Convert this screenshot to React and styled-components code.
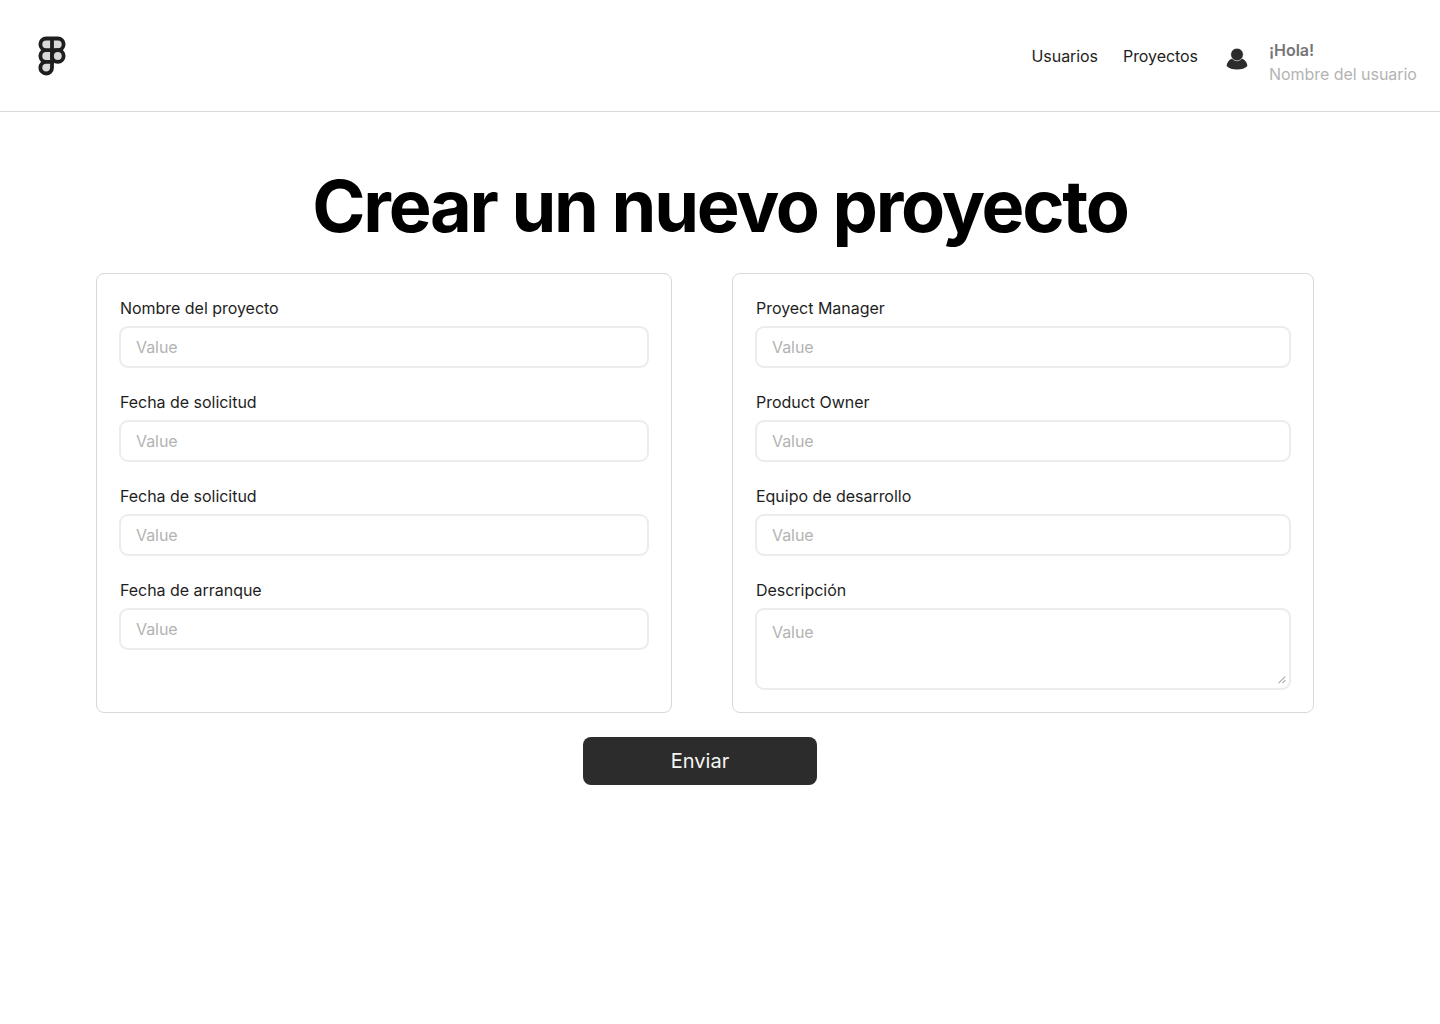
import React from "react";
import styled, { createGlobalStyle } from "styled-components";

const GlobalStyle = createGlobalStyle`
  *, *::before, *::after { box-sizing: border-box; }
  body { margin: 0; background: #fff; font-family: Inter, "Liberation Sans", sans-serif; color: #1e1e1e; }
`;

const Page = styled.div`
  min-height: 1024px;
  display: flex;
  flex-direction: column;
`;

const Header = styled.header`
  height: 112px;
  border-bottom: 1px solid #d9d9d9;
  display: flex;
  align-items: center;
  justify-content: space-between;
  padding: 0 22px 0 32px;
`;

const Nav = styled.nav`
  display: flex;
  align-items: center;
`;

const NavLink = styled.a`
  font-size: 16px;
  line-height: 16px;
  letter-spacing: -0.06px;
  margin-right: 25px;
  padding-top: 1px;
`;

const UserIcon = styled.svg`
  margin: 6px 21px 0 3px;
`;

const UserText = styled.div`
  width: 149px;
  font-size: 16px;
  line-height: 24px;
  letter-spacing: -0.04px;
  padding-top: 13px;
  color: #b3b3b3;
  white-space: nowrap;
`;

const Greeting = styled.div`
  color: #757575;
  font-weight: 600;
`;

const Title = styled.h1`
  margin: 51px 0 0;
  text-align: center;
  font-size: 72px;
  line-height: 86px;
  font-weight: 700;
  letter-spacing: -2.22px;
  color: #000;
`;

const Columns = styled.main`
  display: flex;
  gap: 60px;
  margin: 24px 0 0 96px;
`;

const Card = styled.section`
  width: ${(p) => p.$width}px;
  height: 440px;
  border: 1px solid #d9d9d9;
  border-radius: 8px;
  padding: 23px 22px;
  display: flex;
  flex-direction: column;
  gap: 23px;
`;

const Field = styled.label`
  display: flex;
  flex-direction: column;
  gap: 7px;
  font-size: 16px;
  line-height: 22px;
  letter-spacing: -0.03px;
`;

const Caption = styled.span`
  padding-left: 1px;
`;

const Control = styled.input`
  font: 16px/16px Inter, sans-serif;
  letter-spacing: -0.06px;
  height: 42px;
  width: 100%;
  padding: 0 15px 1px;
  border: 2px solid #ececec;
  border-radius: 9px;
  background: #fff;
  outline: none;
  &::placeholder { color: #b3b3b3; opacity: 1; }
`;

const AreaBox = styled.span`
  position: relative;
  display: block;
  height: 82px;
`;

const Area = styled(Control)`
  display: block;
  height: 82px;
  padding: 11px 15px;
  line-height: 22px;
  resize: none;
`;

const Grip = styled.svg`
  position: absolute;
  right: 5px;
  bottom: 6px;
`;

const Submit = styled.button`
  width: 234px;
  height: 48px;
  margin: 24px 0 0 583px;
  border: 0;
  border-radius: 8px;
  background: #2c2c2c;
  color: #f5f5f5;
  font: 20px/24px Inter, sans-serif;
`;

const Logo = () => (
  <svg width="40" height="40" viewBox="0 0 40 40" fill="#d9d9d9" stroke="#1e1e1e" strokeWidth="3.8">
    <path d="M20 2.5H14.2a5.83 5.83 0 0 0 0 11.66H20ZM20 2.5h5.8a5.83 5.83 0 0 1 0 11.66H20ZM20 14.16h-5.8a5.83 5.83 0 0 0 0 11.66H20Z" />
    <circle cx="25.8" cy="20" r="5.83" />
    <path d="M14.2 25.83H20v5.83a5.83 5.83 0 1 1-5.8-5.83Z" />
  </svg>
);

const left = ["Nombre del proyecto", "Fecha de solicitud", "Fecha de solicitud", "Fecha de arranque"];
const right = ["Proyect Manager", "Product Owner", "Equipo de desarrollo"];

const TextField = ({ label }) => (
  <Field>
    <Caption>{label}</Caption>
    <Control placeholder="Value" />
  </Field>
);

export default function App() {
  return (
    <Page>
      <GlobalStyle />
      <Header>
        <Logo />
        <Nav>
          <NavLink>Usuarios</NavLink>
          <NavLink>Proyectos</NavLink>
          <UserIcon width="22" height="22" viewBox="0 0 22 22" fill="#2c2c2c">
            <path d="M5.5 10.8H16.5C19.3 12.2 21.2 14.8 21.4 18C19.2 20.4 15.5 21.6 11 21.6S2.8 20.4.6 18C.8 14.8 2.7 12.2 5.5 10.8Z" />
            <circle cx="11" cy="6.5" r="6.3" stroke="#fff" strokeWidth=".6" />
          </UserIcon>
          <UserText>
            <Greeting>¡Hola!</Greeting>
            Nombre del usuario
          </UserText>
        </Nav>
      </Header>
      <Title>Crear un nuevo proyecto</Title>
      <Columns>
        <Card $width={576}>
          {left.map((label, i) => <TextField key={i} label={label} />)}
        </Card>
        <Card $width={582}>
          {right.map((label) => <TextField key={label} label={label} />)}
          <Field>
            <Caption>Descripción</Caption>
            <AreaBox>
              <Area as="textarea" placeholder="Value" />
              <Grip width="8" height="8" viewBox="0 0 8 8" stroke="#aaa" strokeWidth="1.2" fill="none">
                <path d="M.6 7.2l6.6-6.6M4.4 7.2l3-3" />
              </Grip>
            </AreaBox>
          </Field>
        </Card>
      </Columns>
      <Submit>Enviar</Submit>
    </Page>
  );
}
